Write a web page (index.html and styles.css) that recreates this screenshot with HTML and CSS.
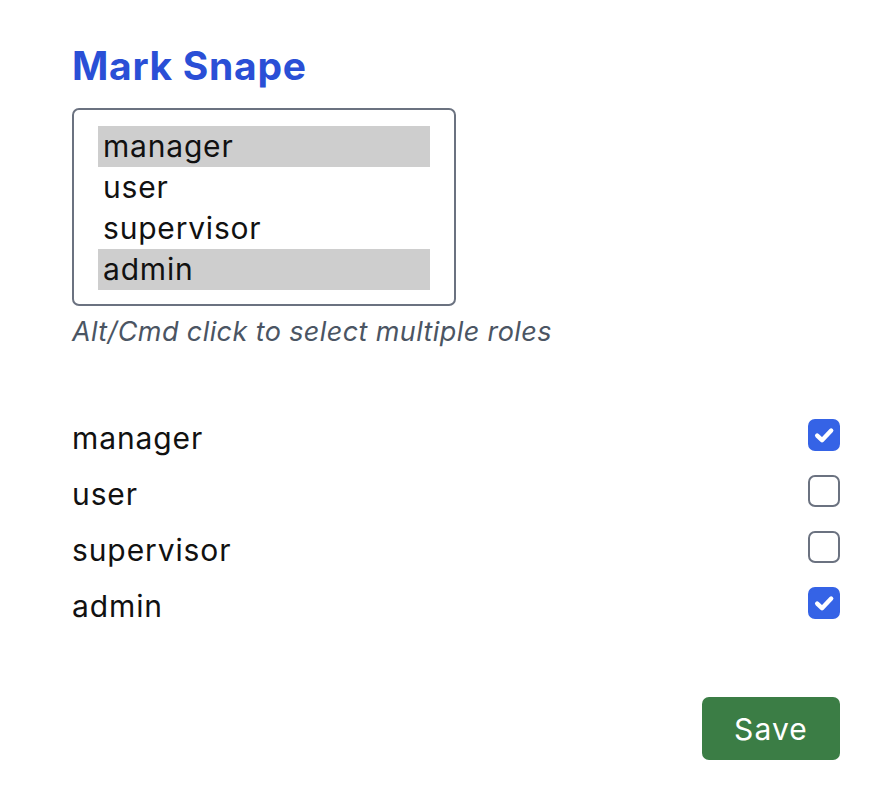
FILE: index.html
```html
<!DOCTYPE html>
<html lang="en">
<head>
<meta charset="utf-8">
<title>Mark Snape – roles</title>
<link rel="stylesheet" href="styles.css">
</head>
<body>
<main class="page">
  <h1 class="title">Mark Snape</h1>
  <div class="listbox" role="listbox" aria-multiselectable="true">
    <div class="option selected" role="option" aria-selected="true">manager</div>
    <div class="option" role="option" aria-selected="false">user</div>
    <div class="option" role="option" aria-selected="false">supervisor</div>
    <div class="option selected" role="option" aria-selected="true">admin</div>
  </div>
  <p class="hint">Alt/Cmd click to select multiple roles</p>

  <ul class="roles">
    <li class="role"><span class="role-name">manager</span>
      <span class="check checked"><svg viewBox="0 0 16 16" width="32" height="32"><path d="M4.6 8.3 L7 10.6 L11.6 5.8" fill="none" stroke="#fff" stroke-width="2.2" stroke-linecap="round" stroke-linejoin="round"/></svg></span></li>
    <li class="role"><span class="role-name">user</span><span class="check"></span></li>
    <li class="role"><span class="role-name">supervisor</span><span class="check"></span></li>
    <li class="role"><span class="role-name">admin</span>
      <span class="check checked"><svg viewBox="0 0 16 16" width="32" height="32"><path d="M4.6 8.3 L7 10.6 L11.6 5.8" fill="none" stroke="#fff" stroke-width="2.2" stroke-linecap="round" stroke-linejoin="round"/></svg></span></li>
  </ul>

  <div class="actions">
    <button class="save" type="button">Save</button>
  </div>
</main>
</body>
</html>
```

FILE: styles.css
```css
* { box-sizing: border-box; }

html, body {
  margin: 0;
  background: #ffffff;
}

body {
  font-family: Inter, "Noto Sans", "Liberation Sans", sans-serif;
  color: #111111;
}

.page {
  padding: 44px 48px 0 72px;
}

.title {
  margin: 0;
  font-size: 39px;
  line-height: 43px;
  font-weight: 700;
  letter-spacing: 0.7px;
  color: #2a4fd6;
}

.listbox {
  margin-top: 21px;
  width: 384px;
  height: 198px;
  border: 2px solid #6b7280;
  border-radius: 7px;
  padding: 16px 24px 0;
}

.option {
  height: 41px;
  line-height: 41px;
  font-size: 30px;
  letter-spacing: 0.8px;
  padding-left: 5px;
  color: #111;
}

.option.selected {
  background: #cecece;
}

.hint {
  margin: 10px 0 0;
  font-size: 27px;
  line-height: 32px;
  letter-spacing: 0.4px;
  font-style: italic;
  color: #4b5563;
}

.roles {
  list-style: none;
  margin: 59px 0 0;
  padding: 0;
}

.role {
  display: flex;
  align-items: center;
  justify-content: space-between;
  height: 56px;
}

.role-name {
  font-size: 30px;
  line-height: 40px;
  letter-spacing: 0.9px;
  padding-top: 6px;
  color: #111;
}

.check {
  width: 32px;
  height: 32px;
  border: 2px solid #6b7280;
  border-radius: 7px;
  display: flex;
  align-items: center;
  justify-content: center;
  background: #fff;
}

.check.checked {
  background: #3563e6;
  border-color: #3563e6;
}

.check svg {
  flex: none;
}

.actions {
  display: flex;
  justify-content: flex-end;
  margin-top: 66px;
}

.save {
  width: 138px;
  height: 63px;
  border: 0;
  border-radius: 7px;
  background: #3b7d45;
  color: #fff;
  font-family: inherit;
  font-size: 30px;
  letter-spacing: 1.1px;
  font-weight: 400;
  padding: 0;
}
```
